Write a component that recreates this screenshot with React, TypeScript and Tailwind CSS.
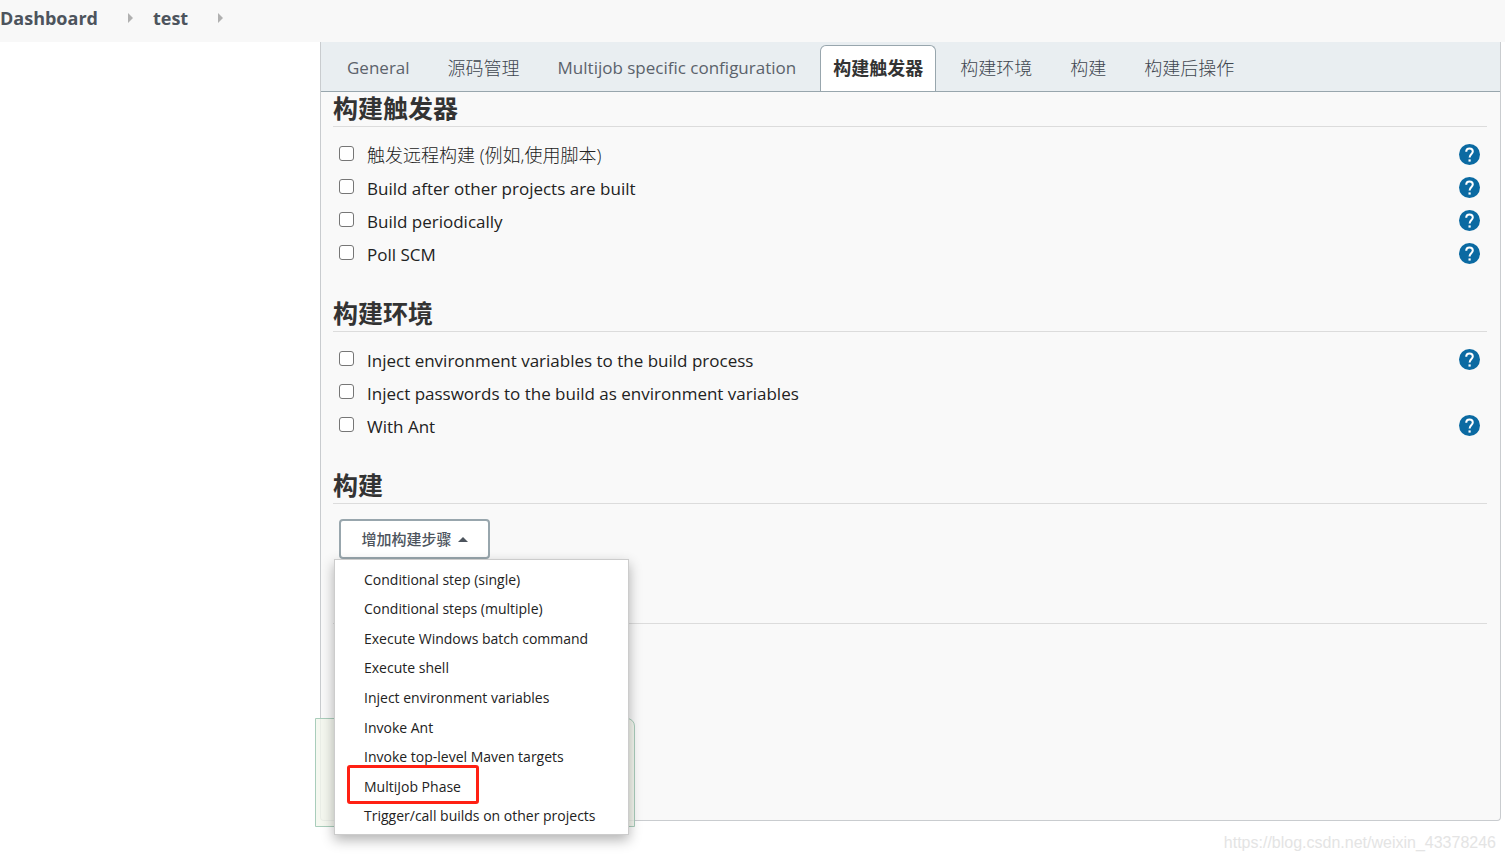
import { useState } from "react"

const tabs = [
  { label: "General", cjk: false },
  { label: "源码管理", cjk: true },
  { label: "Multijob specific configuration", cjk: false },
  { label: "构建触发器", cjk: true },
  { label: "构建环境", cjk: true },
  { label: "构建", cjk: true },
  { label: "构建后操作", cjk: true },
]

const triggers = [
  { id: "remote", label: "触发远程构建 (例如,使用脚本)", help: true },
  { id: "after-others", label: "Build after other projects are built", help: true },
  { id: "periodic", label: "Build periodically", help: true },
  { id: "poll-scm", label: "Poll SCM", help: true },
]

const environment = [
  { id: "inject-env", label: "Inject environment variables to the build process", help: true },
  { id: "inject-pass", label: "Inject passwords to the build as environment variables", help: false },
  { id: "with-ant", label: "With Ant", help: true },
]

const buildSteps = [
  "Conditional step (single)",
  "Conditional steps (multiple)",
  "Execute Windows batch command",
  "Execute shell",
  "Inject environment variables",
  "Invoke Ant",
  "Invoke top-level Maven targets",
  "MultiJob Phase",
  "Trigger/call builds on other projects",
]

type Option = { id: string; label: string; help: boolean }

function Crumb({ label }: { label: string }) {
  return (
    <li className="flex items-center">
      <a href="#" className="text-[#4d545d]">
        {label}
      </a>
      <svg className="mr-5 ml-[30px] h-[10px] w-[5px]" viewBox="0 0 5 10" aria-hidden="true">
        <path d="M0 0L5 5L0 10Z" fill="#b0b0b0" />
      </svg>
    </li>
  )
}

function HelpIcon() {
  return (
    <svg className="size-[21px]" viewBox="0 0 21 21" aria-hidden="true">
      <circle cx="10.5" cy="10.5" r="10.5" fill="#0b6aa2" />
      <path
        d="M7.2 7.8C7.2 5.7 8.6 4.4 10.5 4.4S13.8 5.7 13.8 7.6C13.8 10 10.6 10.2 10.6 13.6"
        fill="none"
        stroke="#fff"
        strokeWidth="2"
      />
      <rect x="9.5" y="15.4" width="2.2" height="2.2" fill="#fff" />
    </svg>
  )
}

function SectionTitle({ children }: { children: string }) {
  return (
    <h2 className="h-[35px] border-b border-[#dcdcdc] text-[25px] leading-8 font-bold text-[#333]">
      {children}
    </h2>
  )
}

function OptionList({ options }: { options: Option[] }) {
  return (
    <ul className="pt-[11px] pr-[7px] pl-[6px]">
      {options.map((option) => (
        <li key={option.id} className="flex h-[33px] items-center">
          <input
            id={option.id}
            type="checkbox"
            className="mb-[2px] size-[15px] shrink-0 appearance-none rounded-[3px] border border-[#767676] bg-white checked:bg-[#0b6aa2]"
          />
          <label
            htmlFor={option.id}
            className={
              option.id === "remote"
                ? "grow pt-[2px] pl-[13px] text-[18px] font-light text-[#222]"
                : "grow pt-[2px] pl-[13px] text-[17px] font-medium text-[#222]"
            }
          >
            {option.label}
          </label>
          {option.help && (
            <button type="button" aria-label={`Help for feature: ${option.label}`}>
              <HelpIcon />
            </button>
          )}
        </li>
      ))}
    </ul>
  )
}

function tabClass(active: boolean, cjk: boolean) {
  if (active) {
    return "h-[46px] rounded-t-md border border-b-0 border-[#98a6ad] bg-white px-3 text-[18px] font-bold whitespace-nowrap text-[#333]"
  }
  return cjk
    ? "h-[46px] px-[14px] text-[18px] font-light whitespace-nowrap text-[#3f464f]"
    : "h-[46px] px-[14px] text-[17px] whitespace-nowrap text-[#5b626b]"
}

export default function App() {
  const [activeTab, setActiveTab] = useState("构建触发器")

  return (
    <div className="min-h-screen overflow-x-hidden bg-white font-['Open_Sans','Noto_Sans_CJK_SC',sans-serif]">
      <nav className="h-[42px] bg-[#f8f8f8]">
        <ol className="flex h-9 items-center text-[18px] font-bold">
          <Crumb label="Dashboard" />
          <Crumb label="test" />
        </ol>
      </nav>

      <main className="pr-1 pl-[320px]">
        <div className="relative rounded-b border border-t-0 border-[#c9cccf] bg-[#f9f9f9] pb-[196px]">
          <div className="flex h-[50px] items-end gap-[10px] border-b border-[#98a6ad] bg-[#e9eef1] pl-3">
            {tabs.map((tab) => (
              <button
                key={tab.label}
                type="button"
                onClick={() => setActiveTab(tab.label)}
                className={tabClass(tab.label === activeTab, tab.cjk)}
              >
                {tab.label}
              </button>
            ))}
          </div>

          <form className="pr-[13px] pl-3">
            <section className="pb-[27px]">
              <SectionTitle>构建触发器</SectionTitle>
              <OptionList options={triggers} />
            </section>

            <section className="pb-[27px]">
              <SectionTitle>构建环境</SectionTitle>
              <OptionList options={environment} />
            </section>

            <section className="pb-16">
              <SectionTitle>构建</SectionTitle>
              <div className="relative z-20 mt-[15px] ml-[6px] w-fit">
                <button
                  type="button"
                  aria-haspopup="menu"
                  className="flex h-10 w-[151px] items-center justify-center gap-[6px] rounded border-2 border-[#98a6ad] bg-white text-[15px] font-medium text-[#4d545d]"
                >
                  增加构建步骤
                  <svg className="h-[5px] w-[10px]" viewBox="0 0 10 5" aria-hidden="true">
                    <path d="M0 5L5 0L10 5Z" fill="#4d545d" />
                  </svg>
                </button>
                <ul
                  role="menu"
                  className="absolute top-full -left-[5px] grid h-[276px] w-[295px] auto-rows-fr border border-[#ccc] bg-white pt-[5px] pb-[3px] shadow-[0_5px_12px_rgba(0,0,0,0.3)]"
                >
                  {buildSteps.map((step) => (
                    <li key={step} role="none" className="relative flex">
                      <button
                        type="button"
                        role="menuitem"
                        className="grow pl-[29px] text-left text-[14px] leading-5 whitespace-nowrap text-[#222]"
                      >
                        {step}
                      </button>
                      {step === "MultiJob Phase" && (
                        <span className="pointer-events-none absolute -top-[7px] left-3 h-[39px] w-[132px] rounded-[3px] border-3 border-[#ff2013]" />
                      )}
                    </li>
                  ))}
                </ul>
              </div>
            </section>
            <hr className="border-[#dcdcdc]" />
          </form>

          {/* sticky save bar, mostly behind the open menu */}
          <div className="absolute -bottom-[7px] -left-[6px] z-10 h-[109px] w-80 rounded-tr-lg border border-[#a9cdbb] bg-[#f3f6ec]/80" />
        </div>
      </main>

      <footer className="pt-[10px] pr-[9px] text-right font-['Liberation_Sans',sans-serif] text-[16px] text-[#e4e4e4]">
        https://blog.csdn.net/weixin_43378246
      </footer>
    </div>
  )
}
